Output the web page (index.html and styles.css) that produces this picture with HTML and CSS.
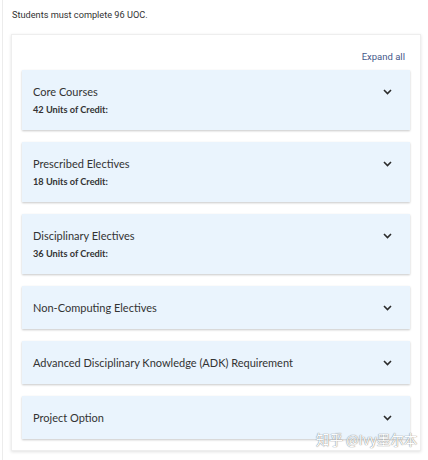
FILE: index.html
```html
<!DOCTYPE html>
<html>
<head>
<meta charset="utf-8">
<link rel="stylesheet" href="styles.css">
</head>
<body>
<div class="page">
  <p class="intro">Students must complete 96 UOC.</p>
  <div class="card">
    <div class="toolbar"><span class="expand">Expand all</span></div>
    <div class="panels">
      <div class="panel">
        <div class="text"><div class="title">Core Courses</div><div class="sub">42 Units of Credit:</div></div>
        <svg class="chev" width="9" height="6" viewBox="0 0 9 6"><path d="M1 1 L4.5 4.5 L8 1" fill="none" stroke="#2b2b2b" stroke-width="1.6"/></svg>
      </div>
      <div class="panel">
        <div class="text"><div class="title">Prescribed Electives</div><div class="sub">18 Units of Credit:</div></div>
        <svg class="chev" width="9" height="6" viewBox="0 0 9 6"><path d="M1 1 L4.5 4.5 L8 1" fill="none" stroke="#2b2b2b" stroke-width="1.6"/></svg>
      </div>
      <div class="panel">
        <div class="text"><div class="title">Disciplinary Electives</div><div class="sub">36 Units of Credit:</div></div>
        <svg class="chev" width="9" height="6" viewBox="0 0 9 6"><path d="M1 1 L4.5 4.5 L8 1" fill="none" stroke="#2b2b2b" stroke-width="1.6"/></svg>
      </div>
      <div class="panel">
        <div class="text"><div class="title">Non-Computing Electives</div></div>
        <svg class="chev" width="9" height="6" viewBox="0 0 9 6"><path d="M1 1 L4.5 4.5 L8 1" fill="none" stroke="#2b2b2b" stroke-width="1.6"/></svg>
      </div>
      <div class="panel">
        <div class="text"><div class="title">Advanced Disciplinary Knowledge (ADK) Requirement</div></div>
        <svg class="chev" width="9" height="6" viewBox="0 0 9 6"><path d="M1 1 L4.5 4.5 L8 1" fill="none" stroke="#2b2b2b" stroke-width="1.6"/></svg>
      </div>
      <div class="panel">
        <div class="text"><div class="title">Project Option</div></div>
        <svg class="chev" width="9" height="6" viewBox="0 0 9 6"><path d="M1 1 L4.5 4.5 L8 1" fill="none" stroke="#2b2b2b" stroke-width="1.6"/></svg>
      </div>
    </div>
  </div>
  <div class="watermark">知乎 @Ivy墨尔本</div>
</div>
</body>
</html>
```
FILE: styles.css
```css
html, body {
  margin: 0;
  padding: 0;
  background: #ffffff;
}
.page {
  position: relative;
  width: 428px;
  height: 460px;
  box-sizing: border-box;
  border-left: 1px solid #ececec;
  margin-left: 2px;
  padding-top: 9px;
  font-family: Lato, "Noto Sans", sans-serif;
}
.intro {
  margin: 0 0 13px 9px;
  font-family: Roboto, "Liberation Sans", sans-serif;
  font-size: 9.2px;
  line-height: 12px;
  color: #333333;
}
.card {
  margin-left: 8px;
  width: 410px;
  box-sizing: border-box;
  border: 1px solid #eeeeee;
  box-shadow: 0 1px 3px rgba(0,0,0,0.12);
  padding: 15px 10px 11px 10px;
  background: #ffffff;
}
.toolbar {
  display: flex;
  justify-content: flex-end;
  height: 13px;
  margin-bottom: 7px;
  padding-right: 5px;
}
.expand {
  font-family: Roboto, "Liberation Sans", sans-serif;
  font-size: 9.5px;
  line-height: 13px;
  color: #45598a;
}
.panels {
  display: flex;
  flex-direction: column;
  gap: 12px;
}
.panel {
  display: flex;
  align-items: flex-start;
  justify-content: space-between;
  background: #eaf4fd;
  box-shadow: 0 1px 2px rgba(0,0,0,0.22);
  padding: 15px 18px 14px 11px;
}
.title {
  font-size: 11px;
  line-height: 14px;
  color: #333333;
}
.sub {
  margin-top: 5px;
  font-size: 9.2px;
  line-height: 12px;
  font-weight: bold;
  color: #333333;
}
.chev {
  margin-top: 4px;
}
.watermark {
  position: absolute;
  left: 313px;
  top: 429px;
  font-family: "Noto Sans CJK SC", sans-serif;
  font-size: 13.5px;
  color: #ffffff;
  text-shadow: 0 0 1px #777, 0 0 1px #777;
  opacity: 0.85;
}
```
